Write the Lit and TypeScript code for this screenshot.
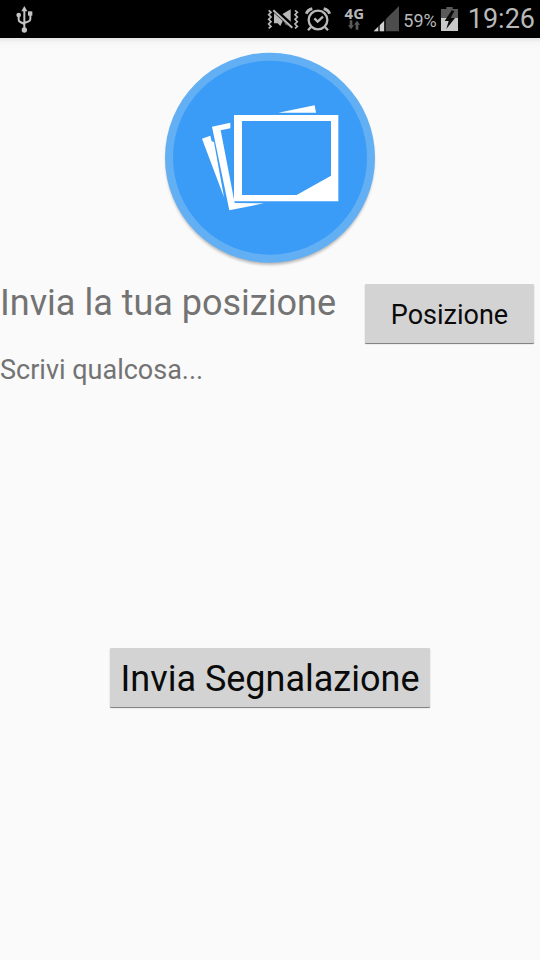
import { LitElement, html, css } from "lit";
import { customElement } from "lit/decorators.js";

@customElement("status-bar")
class StatusBar extends LitElement {
  static styles = css`
    :host {
      display: flex;
      align-items: center;
      height: 38px;
      padding: 0 6px 0 14px;
      background: #000;
      color: #b9b9b9;
      font-family: Roboto, "Noto Sans", sans-serif;
    }
    svg {
      display: block;
      flex: none;
    }
    .spacer {
      flex: 1;
    }
    .alarm {
      margin-left: 6px;
    }
    .net {
      display: flex;
      flex-direction: column;
      align-items: center;
      width: 22px;
      margin: 0 8px 2px 12px;
      font: 700 15px/14px "Noto Sans", sans-serif;
    }
    .percent {
      margin: 2px 4px 0;
      font-size: 18px;
    }
    .clock {
      margin-left: 10px;
      font-size: 27px;
      line-height: 38px;
    }
  `;

  render() {
    return html`
      <svg width="20" height="30" viewBox="0 0 60 90" fill="none" stroke="#c4c4c4" stroke-width="6">
        <path d="M31 20V78M14 34V47Q14 52 19 54L31 60M49 30V45Q49 50 44 52L31 57" />
        <path d="M31 6L40 22H22Z" fill="#c4c4c4" stroke="none" />
        <circle cx="14" cy="33" r="7" fill="#c4c4c4" stroke="none" />
        <path d="M42 22H55V35H42Z" fill="#c4c4c4" stroke="none" />
        <circle cx="31" cy="78" r="8" fill="#c4c4c4" stroke="none" />
      </svg>
      <span class="spacer"></span>
      <svg width="32" height="24" viewBox="0 0 96 72" fill="none" stroke="#b9b9b9" stroke-width="6">
        <path d="M5 10l7 6-7 7 7 7-7 7 7 7-7 7 7 7-7 6" stroke-width="5" />
        <path d="M84 10l7 6-7 7 7 7-7 7 7 7-7 7 7 7-7 6" stroke-width="5" />
        <path d="M21 12L49 38L40 57L32 49H21Z" fill="#b9b9b9" stroke="none" />
        <path d="M40 25L71 7V60L55 52Z" fill="#b9b9b9" stroke="none" />
        <path d="M22 9L78 60" stroke="#000" stroke-width="15" />
        <path d="M19 10L76 62" />
      </svg>
      <svg class="alarm" width="26" height="28" viewBox="0 0 78 84" fill="none" stroke="#b9b9b9" stroke-width="7">
        <circle cx="39" cy="45" r="28" />
        <path d="M28 40L38 50L54 35" />
        <path d="M4 26Q8 14 22 11M74 26Q70 14 56 11" stroke-width="9" />
        <path d="M18 66L9 76M60 66L69 76" />
      </svg>
      <span class="net">
        4G
        <svg width="12" height="10" viewBox="0 0 36 30" fill="#5a5a5a">
          <path d="M5 1H13V16H18L9 28L0 16H5Z" />
          <path d="M23 29H31V14H36L27 2L18 14H23Z" />
        </svg>
      </span>
      <svg width="26" height="26" viewBox="0 0 78 78">
        <path d="M2 76L78 0V76Z" fill="#4c4c4c" />
        <path d="M2 76L34 44V76Z" fill="#d0d0d0" />
        <path d="M18 50V78M36 40V78" stroke="#000" stroke-width="4" />
      </svg>
      <span class="percent">59%</span>
      <svg width="17" height="24" viewBox="0 0 51 72">
        <path d="M16 0H35V6H51V33H0V6H16Z" fill="#5a5a5a" />
        <path d="M0 33H51V72H0Z" fill="#c8c8c8" />
        <path d="M32 10L11 42H23L16 66L42 33H29L40 12Z" fill="#0a0a0a" />
      </svg>
      <time class="clock">19:26</time>
    `;
  }
}

@customElement("app-root")
class AppRoot extends LitElement {
  static styles = css`
    :host {
      display: flex;
      flex-direction: column;
      min-height: 100vh;
      background: #fafafa;
      color: #737373;
      font-family: Roboto, "Noto Sans", sans-serif;
    }
    status-bar {
      padding-right: 5px;
    }
    main {
      display: flex;
      flex-direction: column;
      padding-top: 12px;
      background: linear-gradient(#e4e4e4, #f5f5f5 4px, #fafafa 10px);
    }
    .logo {
      display: block;
      align-self: center;
    }
    .row {
      display: flex;
      align-items: flex-start;
      justify-content: space-between;
      padding: 8px 6px 0 0;
    }
    h1 {
      margin: 0;
      font-size: 36px;
      line-height: 38px;
      font-weight: 400;
      white-space: nowrap;
    }
    button {
      height: 59px;
      padding: 2px 10px 0;
      border: 0;
      border-radius: 1px;
      background: #d3d3d3;
      box-shadow: 0 1px 1px #777;
      color: #0a0a0a;
      font-family: inherit;
      white-space: nowrap;
    }
    .position {
      min-width: 169px;
      font-size: 27px;
    }
    .send {
      align-self: center;
      min-width: 320px;
      margin-top: 6px;
      font-size: 36px;
    }
    textarea {
      display: block;
      box-sizing: border-box;
      width: 100%;
      margin: 11px 0 0;
      padding: 0;
      border: 0;
      outline: 0;
      resize: none;
      background: transparent;
      color: inherit;
      font: 27px/32px Roboto, "Noto Sans", sans-serif;
    }
    textarea::placeholder {
      color: #737373;
      opacity: 1;
    }
  `;

  render() {
    return html`
      <status-bar></status-bar>
      <main>
        <svg class="logo" width="226" height="226" viewBox="6 30 678 678" role="img" aria-label="Foto">
          <defs>
            <filter id="soft" x="-10%" y="-10%" width="120%" height="120%">
              <feGaussianBlur stdDeviation="5" />
            </filter>
          </defs>
          <circle cx="345" cy="362" r="312" fill="#000" opacity=".28" filter="url(#soft)" />
          <circle cx="345" cy="353" r="315" fill="#62aff4" />
          <circle cx="345" cy="353" r="291" fill="#3b9cf7" />
          <path
            fill="#fff"
            fill-rule="evenodd"
            d="M237 225H550V484H237ZM261 243V465H425L528 407V243Z"
          />
          <path
            fill="#fff"
            d="M370 218L479 196L483 218ZM171 260L226 248V265L197 271L239 489L327 490L223 511ZM141 296L166 287L170 304L177 306L207 472Z"
          />
        </svg>
        <div class="row">
          <h1>Invia la tua posizione</h1>
          <button class="position" type="button">Posizione</button>
        </div>
        <textarea rows="9" placeholder="Scrivi qualcosa..." aria-label="Scrivi qualcosa"></textarea>
        <button class="send" type="button">Invia Segnalazione</button>
      </main>
    `;
  }
}
